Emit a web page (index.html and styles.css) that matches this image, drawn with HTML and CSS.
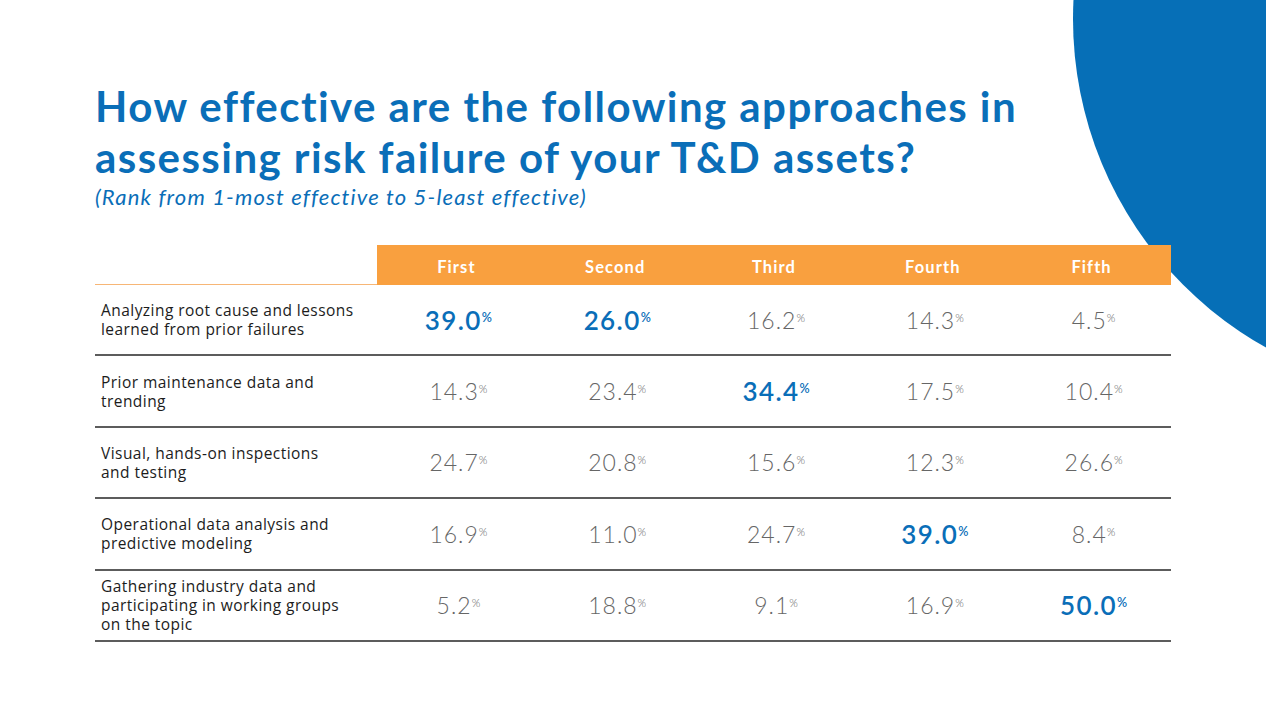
FILE: index.html
```html
<!DOCTYPE html>
<html lang="en">
<head>
<meta charset="utf-8">
<title>Approaches to assessing risk failure</title>
<link rel="stylesheet" href="styles.css">
</head>
<body>
<div class="slide">
  <div class="circle"></div>
  <h1 class="title">How effective are the following approaches in<br>assessing risk failure of your T&amp;D assets?</h1>
  <p class="subtitle">(Rank from 1-most effective to 5-least effective)</p>

  <div class="table">
    <div class="hcell hlabel"></div>
    <div class="hcell">First</div>
    <div class="hcell">Second</div>
    <div class="hcell">Third</div>
    <div class="hcell">Fourth</div>
    <div class="hcell">Fifth</div>

    <div class="cell label">Analyzing root cause and lessons<br>learned from prior failures</div>
    <div class="cell"><span class="num hi">39.0<span class="pct">%</span></span></div>
    <div class="cell"><span class="num hi">26.0<span class="pct">%</span></span></div>
    <div class="cell"><span class="num">16.2<span class="pct">%</span></span></div>
    <div class="cell"><span class="num">14.3<span class="pct">%</span></span></div>
    <div class="cell"><span class="num">4.5<span class="pct">%</span></span></div>

    <div class="cell label">Prior maintenance data and<br>trending</div>
    <div class="cell"><span class="num">14.3<span class="pct">%</span></span></div>
    <div class="cell"><span class="num">23.4<span class="pct">%</span></span></div>
    <div class="cell"><span class="num hi">34.4<span class="pct">%</span></span></div>
    <div class="cell"><span class="num">17.5<span class="pct">%</span></span></div>
    <div class="cell"><span class="num">10.4<span class="pct">%</span></span></div>

    <div class="cell label">Visual, hands-on inspections<br>and testing</div>
    <div class="cell"><span class="num">24.7<span class="pct">%</span></span></div>
    <div class="cell"><span class="num">20.8<span class="pct">%</span></span></div>
    <div class="cell"><span class="num">15.6<span class="pct">%</span></span></div>
    <div class="cell"><span class="num">12.3<span class="pct">%</span></span></div>
    <div class="cell"><span class="num">26.6<span class="pct">%</span></span></div>

    <div class="cell label">Operational data analysis and<br>predictive modeling</div>
    <div class="cell"><span class="num">16.9<span class="pct">%</span></span></div>
    <div class="cell"><span class="num">11.0<span class="pct">%</span></span></div>
    <div class="cell"><span class="num">24.7<span class="pct">%</span></span></div>
    <div class="cell"><span class="num hi">39.0<span class="pct">%</span></span></div>
    <div class="cell"><span class="num">8.4<span class="pct">%</span></span></div>

    <div class="cell label">Gathering industry data and<br>participating in working groups<br>on the topic</div>
    <div class="cell"><span class="num">5.2<span class="pct">%</span></span></div>
    <div class="cell"><span class="num">18.8<span class="pct">%</span></span></div>
    <div class="cell"><span class="num">9.1<span class="pct">%</span></span></div>
    <div class="cell"><span class="num">16.9<span class="pct">%</span></span></div>
    <div class="cell"><span class="num hi">50.0<span class="pct">%</span></span></div>
  </div>
</div>
</body>
</html>
```

FILE: styles.css
```css
html, body {
  margin: 0;
  padding: 0;
  background: #ffffff;
}

.slide {
  position: relative;
  width: 1266px;
  height: 712px;
  overflow: hidden;
  box-sizing: border-box;
  padding: 81px 0 0 95px;
  font-family: "Lato", "Open Sans", sans-serif;
}

.circle {
  position: absolute;
  left: 1073px;
  top: -357px;
  width: 752px;
  height: 752px;
  border-radius: 50%;
  background: #066fb7;
  z-index: 0;
}

.title {
  position: relative;
  z-index: 1;
  margin: 0;
  font-family: "Lato", sans-serif;
  font-weight: 700;
  font-size: 42px;
  line-height: 51px;
  color: #0a6eb8;
  letter-spacing: 1.45px;
}

.subtitle {
  position: relative;
  z-index: 1;
  margin: 1px 0 0 0;
  font-family: "Lato", sans-serif;
  font-style: italic;
  font-weight: 400;
  font-size: 22px;
  line-height: 26px;
  letter-spacing: 1.15px;
  color: #0a6eb8;
}

.table {
  position: relative;
  z-index: 1;
  margin-top: 35px;
  width: 1076px;
  display: grid;
  grid-template-columns: 282px repeat(5, 1fr);
  grid-template-rows: 40px repeat(5, 71.4px);
}

.hcell {
  background: #f9a03f;
  color: #ffffff;
  font-family: "Lato", sans-serif;
  font-weight: 700;
  font-size: 16.5px;
  letter-spacing: 1.1px;
  display: flex;
  align-items: center;
  justify-content: center;
  padding-top: 3px;
  box-sizing: border-box;
}

.hcell.hlabel {
  background: transparent;
  border-bottom: 1px solid #f7b676;
}

.cell {
  box-sizing: border-box;
  border-bottom: 2px solid #5c5c5c;
  display: flex;
  align-items: center;
  justify-content: center;
}

.cell.label {
  justify-content: flex-start;
  padding: 1px 0 0 6px;
  font-family: "Open Sans", sans-serif;
  font-size: 15.5px;
  line-height: 19px;
  letter-spacing: 0.45px;
  color: #1c1c1c;
}

.num {
  font-family: "Lato", sans-serif;
  font-weight: 300;
  font-size: 23px;
  letter-spacing: 1px;
  color: #666666;
  padding-left: 4px;
}

.num.hi {
  font-weight: 600;
  font-size: 26px;
  letter-spacing: 1.4px;
  color: #0a6eb8;
}

.pct {
  font-size: 11px;
  letter-spacing: 0;
  vertical-align: 7px;
}

.num.hi .pct {
  font-size: 12.5px;
  vertical-align: 8px;
}
```
